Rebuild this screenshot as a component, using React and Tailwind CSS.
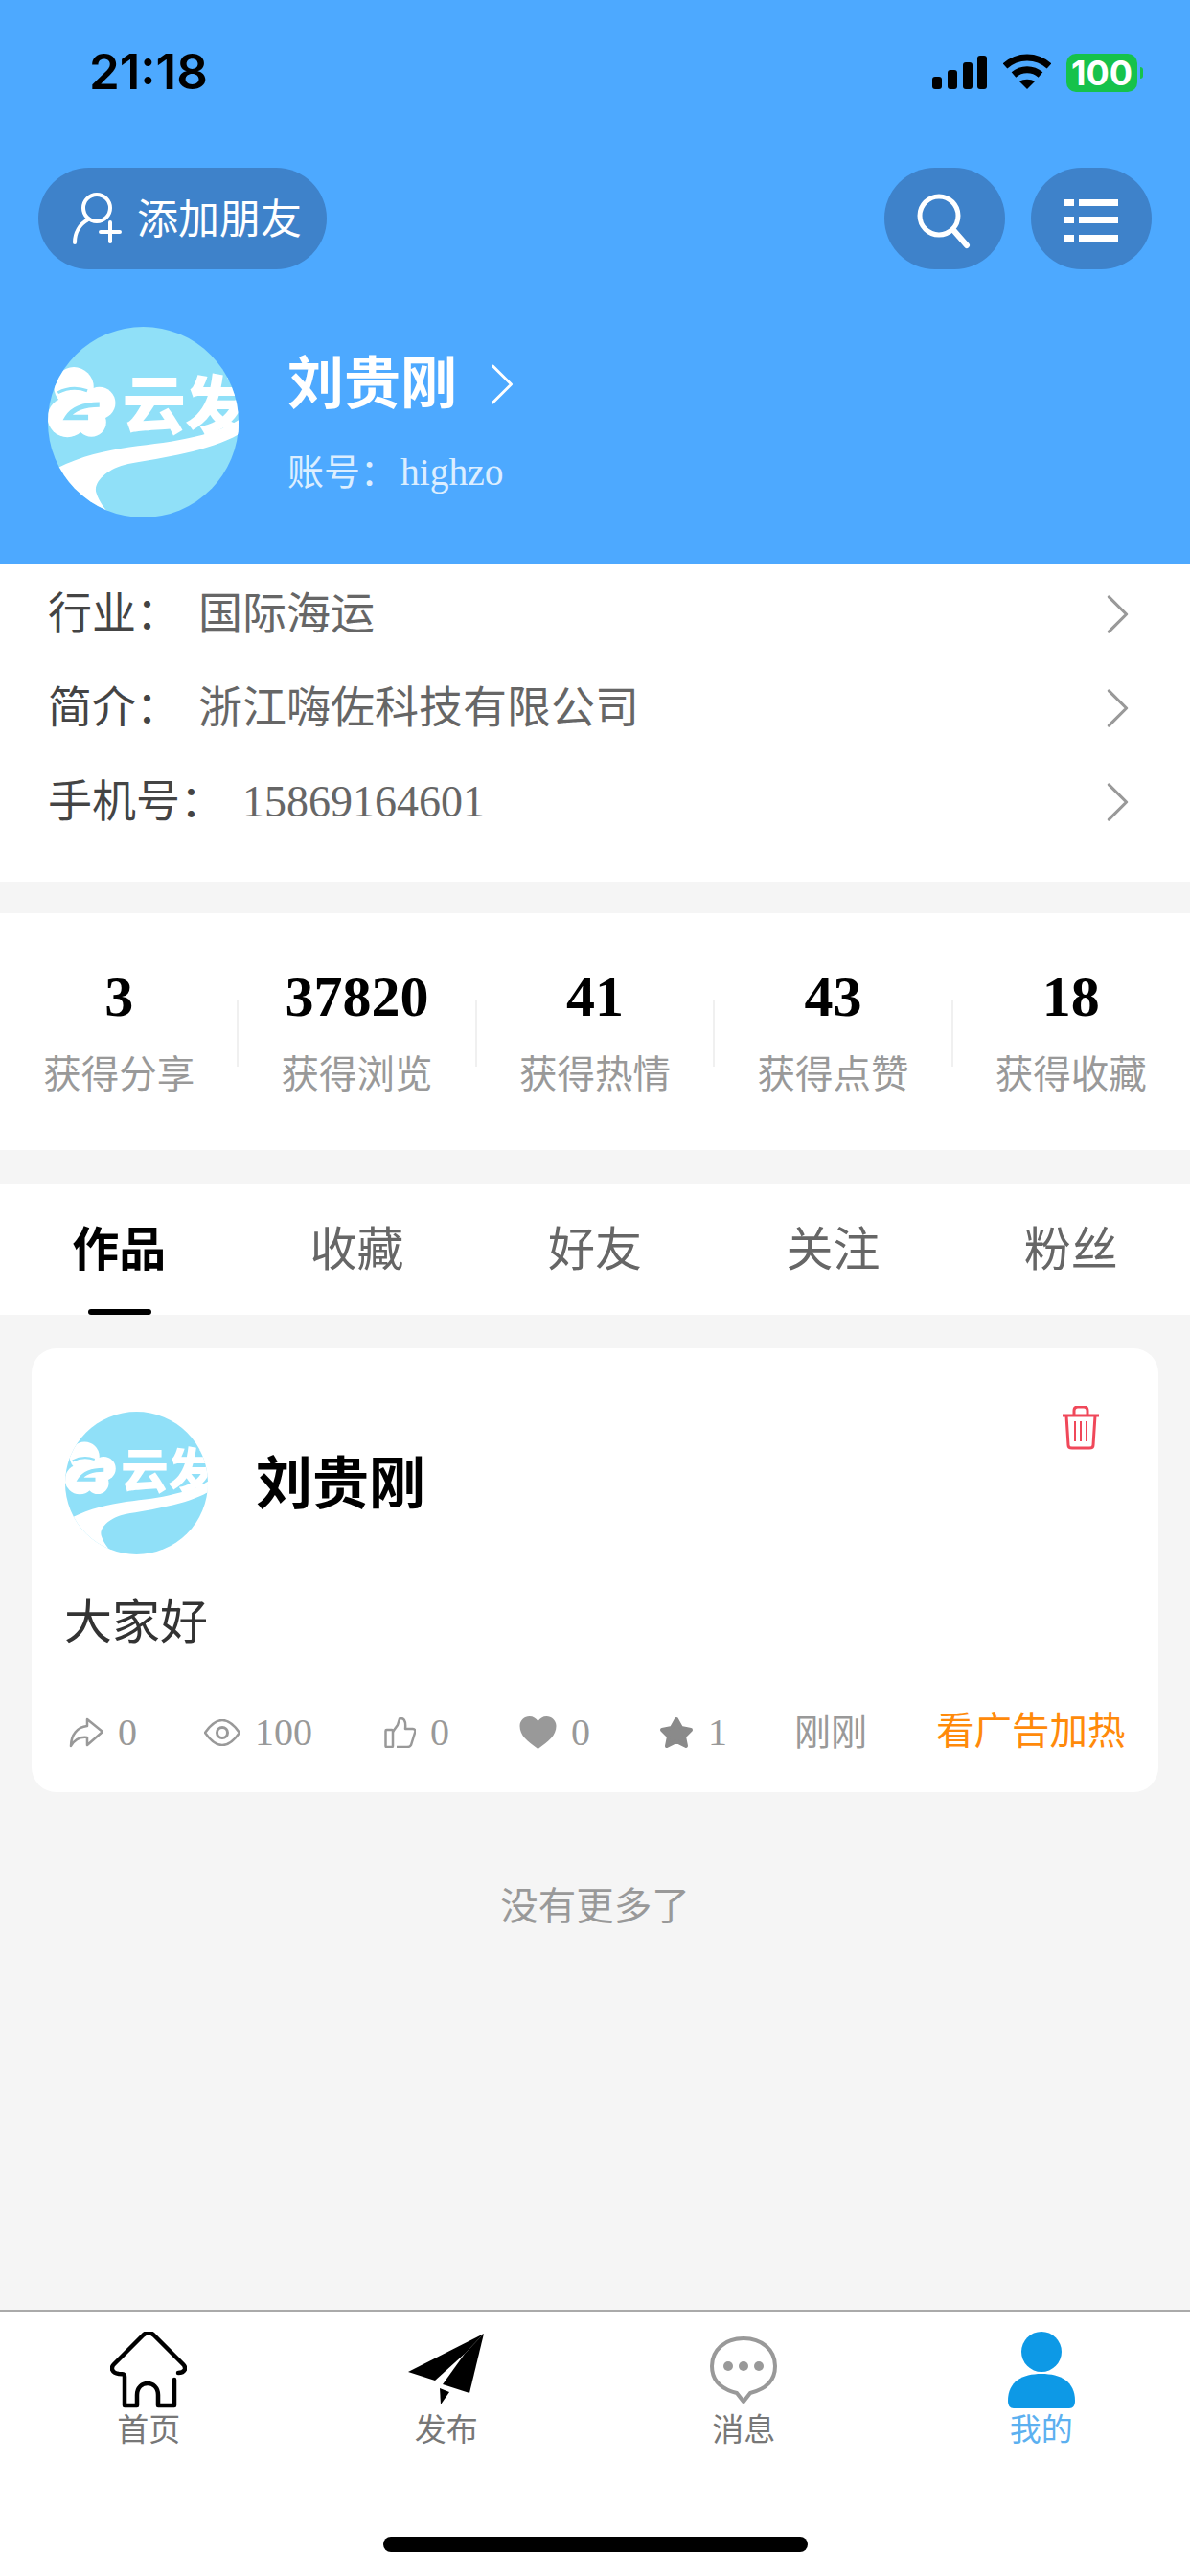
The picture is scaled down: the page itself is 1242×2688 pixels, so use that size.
const cjk = { fontFamily: '"Liberation Serif","Noto Sans CJK SC",serif' };

function Logo({ className }) {
  return (
    <div className={`rounded-full overflow-hidden shrink-0 ${className}`}>
      <svg viewBox="89 62 596 596" className="w-full h-full block">
        <rect x="89" y="62" width="596" height="596" fill="#90E0F8" />
        <g fill="#fff">
          <circle cx="170" cy="250" r="62" />
          <circle cx="250" cy="300" r="50" />
          <circle cx="150" cy="345" r="62" />
          <circle cx="225" cy="360" r="46" />
        </g>
        <path d="M120 268 Q165 245 212 262" stroke="#90E0F8" strokeWidth="9" fill="none" />
        <path d="M250 305 Q175 305 150 345 L215 345" stroke="#90E0F8" strokeWidth="16" fill="none" />
        <text x="322" y="380" fontSize="198" fontWeight="900" fill="#fff" fontFamily="Noto Sans CJK SC">云</text>
        <text x="518" y="380" fontSize="198" fontWeight="900" fill="#fff" fontFamily="Noto Sans CJK SC">发</text>
        <path d="M89 520 C240 430 400 440 520 412 C600 395 650 378 690 350 L690 395 C600 450 450 470 340 490 C270 505 230 550 240 580 C250 610 270 640 300 660 L89 660 Z" fill="#fff" />
      </svg>
    </div>
  );
}

function Chevron({ className, color = "#999", w = 3.5 }) {
  return (
    <svg viewBox="0 0 24 44" className={className} fill="none" stroke={color} strokeWidth={w} strokeLinecap="round" strokeLinejoin="round">
      <path d="M2 2 L22 22 L2 42" />
    </svg>
  );
}

function StatusBar() {
  return (
    <div className="h-[175px] flex justify-between pl-[93px] pr-[55px] pt-[48px]">
      <div className="text-[51px] leading-[54px] font-semibold text-black" style={{ fontFamily: 'Inter,sans-serif' }}>21:18</div>
      <div className="flex items-start pt-[8px]">
        <svg width="60" height="36" viewBox="0 0 60 36" fill="#000" className="block mt-[2px]">
          <rect x="0" y="22" width="10" height="13" rx="3" />
          <rect x="16" y="15" width="10" height="20" rx="3" />
          <rect x="32" y="7" width="10" height="28" rx="3" />
          <rect x="47" y="0" width="10" height="35" rx="3" />
        </svg>
        <svg width="50" height="38" viewBox="0 0 50 38" fill="none" stroke="#000" strokeWidth="7" className="block ml-[14px]">
          <path d="M2 13 C15 1 35 1 48 13" />
          <path d="M11 22 C19 15 31 15 39 22" />
          <path d="M25 37 L17 29 C21 26 29 26 33 29 Z" fill="#000" stroke="none" />
        </svg>
        <div className="relative ml-[16px] w-[74px] h-[40px] rounded-[10px] bg-[#16C24B] flex items-center justify-center text-white text-[36px] font-bold leading-none" style={{ fontFamily: 'Inter,sans-serif' }}>
          100
          <span className="absolute -right-[6px] top-[14px] w-[3px] h-[12px] rounded-r bg-[#16C24B]" />
        </div>
      </div>
    </div>
  );
}

function Toolbar() {
  return (
    <div className="h-[106px] flex justify-between pl-[40px] pr-[40px]">
      <div className="w-[301px] rounded-full bg-[#3E82CA] flex items-center pl-[35px]">
        <svg width="52" height="54" viewBox="0 0 52 54" fill="none" stroke="#fff" strokeWidth="4" strokeLinecap="round">
          <ellipse cx="26" cy="16" rx="14" ry="14" />
          <path d="M17 28 C8 33 3 42 3 52" />
          <path d="M30 41 H50 M40 31 V51" />
        </svg>
        <span className="ml-[16px] mt-[3px] text-[43px] leading-none text-white">添加朋友</span>
      </div>
      <div className="flex gap-[27px]">
        <div className="w-[126px] rounded-full bg-[#3E82CA] flex items-center justify-center">
          <svg width="60" height="60" viewBox="0 0 60 60" fill="none" stroke="#fff" strokeWidth="5" strokeLinecap="round" className="mt-[6px]">
            <circle cx="24" cy="24" r="20" />
            <path d="M39 39 L53 55" strokeWidth="6" />
          </svg>
        </div>
        <div className="w-[126px] rounded-full bg-[#3E82CA] flex items-center justify-center">
          <svg width="56" height="44" viewBox="0 0 56 44" fill="#fff" className="mt-[3px]">
            <rect x="0" y="0" width="10" height="7" />
            <rect x="15" y="0" width="41" height="7" />
            <rect x="0" y="18" width="10" height="7" />
            <rect x="15" y="18" width="41" height="7" />
            <rect x="0" y="37" width="10" height="7" />
            <rect x="15" y="37" width="41" height="7" />
          </svg>
        </div>
      </div>
    </div>
  );
}

function Header() {
  return (
    <div className="h-[589px] bg-[#4DA9FF]">
      <StatusBar />
      <Toolbar />
      <div className="flex pl-[50px] pt-[60px]">
        <Logo className="w-[199px] h-[199px]" />
        <div className="ml-[51px] pt-[23px]">
          <div className="flex items-center h-[74px]">
            <span className="text-[59px] leading-none font-bold text-white">刘贵刚</span>
            <Chevron className="w-[24px] h-[42px] ml-[35px]" color="#fff" w={3} />
          </div>
          <div className="mt-[30px] flex items-baseline text-[38px] leading-[50px] text-[#DCEEFF]">
            <span>账号：</span>
            <span className="ml-[4px] text-[39.5px]">highzo</span>
          </div>
        </div>
      </div>
    </div>
  );
}

function InfoRow({ label, value }) {
  return (
    <div className="h-[98px] flex items-center justify-between pl-[50px] pr-[64px]">
      <div className="flex items-center text-[46px] leading-none">
        <span className="text-[#444]">{label}</span>
        <span className="ml-[19px] text-[#666]">{value}</span>
      </div>
      <Chevron className="w-[23px] h-[40px]" />
    </div>
  );
}

function Stat({ n, label, divider }) {
  return (
    <div className="relative flex-1 flex flex-col items-center pt-[60px]">
      <div className="h-[54px] text-[60px] leading-[54px] font-bold text-black">{n}</div>
      <div className="mt-[30px] text-[39.5px] leading-[50px] text-[#999]">{label}</div>
      {divider && <span className="absolute -right-[1px] top-[91px] w-[2px] h-[69px] bg-[#F0F0F0]" />}
    </div>
  );
}

function Tab({ label, active }) {
  return (
    <div className="relative flex-1 flex justify-center pt-[45px]">
      <span className={`text-[49px] leading-[50px] ${active ? "font-bold text-black" : "text-[#666]"}`}>{label}</span>
      {active && <span className="absolute bottom-0 left-[92px] w-[66px] h-[6px] rounded-full bg-black" />}
    </div>
  );
}

const G = "#999";
function Meta({ ml, icon, value }) {
  return (
    <div className={`flex items-center ${ml}`}>
      {icon}
      {value !== undefined && <span className="ml-[15px] text-[40px] leading-none text-[#999]">{value}</span>}
    </div>
  );
}

function Card() {
  return (
    <div className="relative mx-[33px] mt-[35px] h-[463px] bg-white rounded-[26px]">
      <div className="flex items-center pl-[35px] pt-[66px]">
        <Logo className="w-[149px] h-[149px]" />
        <span className="ml-[50px] mt-[4px] text-[59px] leading-none font-bold text-black">刘贵刚</span>
      </div>
      <svg width="40" height="46" viewBox="0 0 40 46" fill="none" stroke="#F0485A" strokeWidth="3" className="absolute left-[1075px] top-[60px]">
        <path d="M1 10 H39" />
        <path d="M13 10 V5 Q13 1 17 1 H23 Q27 1 27 5 V10" />
        <path d="M5 10 L7 41 Q7 44 11 44 H29 Q33 44 33 41 L35 10" />
        <path d="M14 16 V37 M20 16 V37 M26 16 V37" strokeWidth="2" />
      </svg>
      <div className="mt-[41px] pl-[34px] text-[50px] leading-[60px] text-[#333]">大家好</div>
      <div className="flex items-center pl-[39px] mt-[60px] h-[50px]">
        <Meta ml="" value="0" icon={
          <svg width="36" height="32" viewBox="0 0 36 32" fill="none" stroke={G} strokeWidth="2.5" strokeLinejoin="round">
            <path d="M19 2 L35 15 L19 29 V21 C11 20 6 23 2 30 C2 18 9 10 19 9 Z" />
          </svg>
        } />
        <Meta ml="ml-[70px]" value="100" icon={
          <svg width="38" height="28" viewBox="0 0 38 28" fill="none" stroke={G} strokeWidth="2.5">
            <path d="M1 14 Q19 -12 37 14 Q19 40 1 14 Z" />
            <circle cx="19" cy="14" r="5.5" strokeWidth="3" />
          </svg>
        } />
        <Meta ml="ml-[75px]" value="0" icon={
          <svg width="33" height="32" viewBox="0 0 33 32" fill="none" stroke={G} strokeWidth="2.5" strokeLinejoin="round">
            <rect x="1.5" y="13" width="7.5" height="18" rx="1" />
            <path d="M9 15 L14 8 L16 1.5 C20 0 23 3 22 12 H30 C32 12 33 14 32 16 L28 29 C27 31 26 31 24 31 H13" />
          </svg>
        } />
        <Meta ml="ml-[73px]" value="0" icon={
          <svg width="39" height="34" viewBox="0 0 38 34" fill={G}>
            <path d="M19 34 C8 26 0 20 0 10 C0 4 5 0 10 0 C14 0 17 2 19 5 C21 2 24 0 28 0 C33 0 38 4 38 10 C38 20 30 26 19 34 Z" />
          </svg>
        } />
        <Meta ml="ml-[72px]" value="1" icon={
          <svg width="36" height="34" viewBox="0 0 36 34" fill="#8A8A8A" stroke="#8A8A8A" strokeWidth="4" strokeLinejoin="round">
            <path d="M18 3 L23 12 L33 14 L26 21 L28 31 L18 26 L8 31 L10 21 L3 14 L13 12 Z" />
          </svg>
        } />
        <span className="ml-[70px] text-[38px] leading-none text-[#999]">刚刚</span>
        <span className="ml-[72px] text-[39.5px] leading-none text-[#FF8A0A]">看广告加热</span>
      </div>
    </div>
  );
}

function NavItem({ icon, label, active }) {
  return (
    <div className="flex-1 flex flex-col items-center">
      <div className="h-[80px] flex items-center justify-center">{icon}</div>
      <div className={`mt-[3px] text-[33px] leading-[40px] ${active ? "text-[#5CB0F0]" : "text-[#777]"}`}>{label}</div>
    </div>
  );
}

function BottomNav() {
  return (
    <div className="h-[278px] bg-white border-t-2 border-[#AAAAAA] pt-[21px] flex flex-col">
      <div className="flex">
        <NavItem label="首页" icon={
          <svg width="80" height="80" viewBox="0 0 80 80" fill="none" stroke="#000" strokeWidth="4.5" strokeLinejoin="round" strokeLinecap="round">
            <path d="M67 50 V77 H50 V66 C50 50 28 50 28 66 V77 H15 V47 C15 44 13 44 9 44 C2 43 0 38 4 34 L34 4 C38 0 42 0 46 4 L76 34 C80 38 78 43 71 43" />
          </svg>
        } />
        <NavItem label="发布" icon={
          <svg width="80" height="76" viewBox="0 0 80 76" fill="#000">
            <path d="M79 0 L0 40 L28 49 L59 21 Z" />
            <path d="M79 0 L59 21 L36 53 L64 62 Z" />
            <path d="M33 57 L43 61 L34 74 Z" />
          </svg>
        } />
        <NavItem label="消息" active={false} icon={
          <svg width="70" height="70" viewBox="0 0 70 70" fill="none" stroke="#999" strokeWidth="4" strokeLinejoin="round">
            <path d="M28 59 C12 55 2 46 2 31 C2 14 16 2 35 2 C54 2 68 14 68 31 C68 46 58 55 42 59 L35 68 Z" />
            <g fill="#999" stroke="none">
              <circle cx="19" cy="31" r="5" />
              <circle cx="35" cy="31" r="5" />
              <circle cx="51" cy="31" r="5" />
            </g>
          </svg>
        } />
        <NavItem label="我的" active icon={
          <svg width="70" height="80" viewBox="0 0 70 80" fill="#0D99E6">
            <ellipse cx="35" cy="21" rx="21" ry="21" />
            <path d="M0 72 C0 52 15 44 35 44 C55 44 70 52 70 72 C70 77 68 80 64 80 H6 C2 80 0 77 0 72 Z" />
          </svg>
        } />
      </div>
      <div className="mt-[91px] mx-auto w-[443px] h-[16px] rounded-full bg-black" />
    </div>
  );
}

export default function App() {
  return (
    <div className="w-[1242px] h-[2688px] flex flex-col bg-[#F5F5F5] overflow-hidden" style={cjk}>
      <Header />
      <div className="bg-white h-[331px] pt-[3px]">
        <InfoRow label="行业：" value="国际海运" />
        <InfoRow label="简介：" value="浙江嗨佐科技有限公司" />
        <InfoRow label="手机号：" value="15869164601" />
      </div>
      <div className="mt-[33px] h-[247px] bg-white flex">
        <Stat n="3" label="获得分享" divider />
        <Stat n="37820" label="获得浏览" divider />
        <Stat n="41" label="获得热情" divider />
        <Stat n="43" label="获得点赞" divider />
        <Stat n="18" label="获得收藏" />
      </div>
      <div className="mt-[35px] h-[137px] bg-white flex">
        <Tab label="作品" active />
        <Tab label="收藏" />
        <Tab label="好友" />
        <Tab label="关注" />
        <Tab label="粉丝" />
      </div>
      <div className="flex-1">
        <Card />
        <div className="mt-[95px] text-center text-[39.5px] leading-[50px] text-[#999]">没有更多了</div>
      </div>
      <BottomNav />
    </div>
  );
}
